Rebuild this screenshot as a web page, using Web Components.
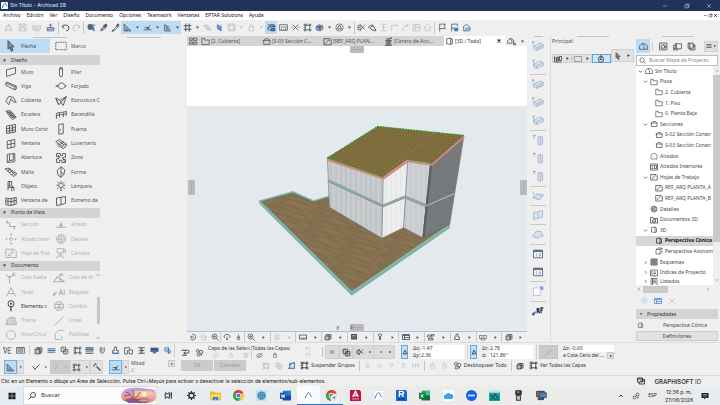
<!DOCTYPE html>
<html lang="es">
<head>
<meta charset="utf-8">
<title>Sin Título - Archicad 28</title>
<style>
  html, body { margin: 0; height: 100%; }
  body { background: #efefef; }
</style>
</head>
<body>
<archi-app></archi-app>
<script>
const RESET = `
  *, *::before, *::after { box-sizing: border-box; }
  button, input { font: inherit; color: inherit; margin: 0; padding: 0; border: 0; background: none; border-radius: 0; min-width: 0; outline: 0; }
  button { display: inline-flex; align-items: center; justify-content: center; white-space: nowrap; flex: none; }
  a { color: inherit; text-decoration: none; }
`;

/* Glyphs on a 16 x 16 grid, stroked with the current colour. */
const GLYPHS = {
  caret: '<path class="f" d="M3 5h10l-5 7z"/>',
  play: '<path class="f" d="M5 3l7 5-7 5z"/>',
  chevdown: '<path d="M3 5.500l5 5 5-5" stroke-width="2.400"/>',
  chevup: '<path d="M3 10.500l5-5 5 5" stroke-width="2.400"/>',
  chevright: '<path d="M6 3l5 5-5 5" stroke-width="2"/>',
  chevleft: '<path d="M10 3L5 8l5 5" stroke-width="2.400"/>',
  neu: '<path d="M1 12h14M4 12V6h8v6M8 6V2M5.500 4.500L8 2l2.500 2.500M2 14h3M11 14h3"/>',
  save: '<path d="M2 2h12v12H2zM5 2v4h6V2M4 14V9h8v5"/>',
  print: '<path d="M1 5h14v6H1zM4 11v3h8v-3M4 8h8"/>',
  share: '<path d="M2 8h12v6H2zM8 9V2M5 4.500L8 2l3 2.500" /><path d="M2 11h12" stroke="#3a78c8" stroke-width="2"/>',
  undo: '<path d="M5 3L2 7l4 2.500M2 7c4-5 12-4 12 2 0 3-2 5-5 5" stroke-width="1.700"/>',
  redo: '<path d="M11 3l3 4-4 2.500M14 7C10 2 2 3 2 9c0 3 2 5 5 5" stroke-width="1.700"/>',
  find: '<circle cx="6" cy="7" r="4" fill="#3a6fb0"/><path d="M2 3h9v8H2zM12 2l2 2-2 2M9 10l5 4" /><path d="M12 8v6" stroke="#2d6fc2" stroke-width="2"/>',
  pick: '<path d="M3 14l1-4 6-6 3 3-6 6z" fill="#7da8dd"/><path class="f" d="M9 3l3-2 3 3-2 3z"/><path d="M8 4l4 4" stroke-width="2"/>',
  inject: '<path d="M2 15l4-5 6-6 2 2-6 6z" fill="#cfd8e4"/><path class="f" d="M9 4l4-3 2 2-3 4z"/><path d="M2 15l3-3" stroke-width="2"/>',
  setsq: '<path d="M2 2v12h12z" stroke-width="1.600"/><path d="M5 8v3.500h3.500zM5 14v-2M8 14v-2M11 14v-1"/>',
  guide: '<path d="M1 12h14M3 8h7M7 12l6-8" stroke-width="1.400"/><circle cx="9" cy="9" r="1.500" fill="#3a78c8"/>',
  snap: '<path d="M3 2v12M3 5h4v9M6 9h5v5M3 14h11" stroke-width="1.500"/><path d="M7 6h4" stroke="#3a78c8"/>',
  grid: '<path d="M5 1v14M11 1v14M1 5h14M1 11h14" stroke-width="1.800"/>',
  plane: '<path d="M1 4h8l6 8H7zM4 4l7 8" stroke="#a7bcd8" fill="#d5e1f0"/>',
  cutp: '<path d="M4 3l7 4v7l-7-4z" fill="#5b97e0" stroke="#3d6fb4"/><path d="M11 2v13" stroke="#8aa"/>',
  sq: '<path d="M2 2h12v12H2zM4 4h8v8H4z"/>',
  lock: '<path d="M4 7h8v7H4zM5.500 7V5c0-4 5-4 5 0v2"/>',
  susp: '<path d="M2 13V7h5V3h6M4 13h8V8M6 5L2 2M12 3v4M9 6h6" stroke-width="1.800"/><path d="M7 9h7v5H7z" fill="#3a78c8"/>',
  meas: '<path d="M1 3h14v10H1zM4 6v2M7 6v3M10 6v2M4 13v-3M8 13v-2M12 13V6" stroke-width="1.300"/>',
  cross: '<path d="M3 3l10 10M13 3L3 13M1 8h2M13 8h2" stroke-width="1.500"/>',
  group: '<path d="M4 4h8v8H4zM2 2h3v3H2zM11 2h3v3h-3zM2 11h3v3H2zM11 11h3v3h-3z" stroke-width="1.300"/><path d="M7 1v4M1 8h4" />',
  cube: '<path d="M2 6l5-3 7 2v6l-5 3-7-2zM2 6l7 2 5-3M9 8v6" fill="#9cbce8"/><circle cx="8" cy="8" r="2.500" fill="#3a78c8"/>',
  tri: '<circle cx="8" cy="8" r="6.500"/><path d="M8 3.500l4 7H4z" stroke-width="1.500"/>',
  trim: '<path d="M2 3v10M2 8h4M14 3L6 12M6 5l8 6" stroke-width="1.400"/><circle cx="6" cy="4" r="1.500"/><circle cx="6" cy="12" r="1.500"/>',
  adjust: '<path d="M1 9c2-6 8-7 9-3M4 10c0-3 3-5 6-4l4 7-3 1z" stroke-width="1.700"/>',
  inter: '<path d="M3 2h10M8 2v12M3 14h10M5 8h6"/>',
  corner: '<path d="M3 14V4h10M10 2l3 2-3 2"/>',
  fillet: '<path d="M3 14c0-6 4-10 10-10M10 2l3 2-3 3"/>',
  elev: '<path d="M2 3h12v11H2zM6 3v11M6 8h8M9 3v3"/>',
  home: '<path d="M1.500 8L8 2l6.500 6H12v6H4V8z"/>',
  pent: '<path d="M2 6l4-3h4l4 3v8H2z" stroke-width="1.200"/>',
  flag: '<path d="M3 15V2h10l-2 4 2 4H3" stroke-width="1.400"/>',
  flagb: '<path d="M3 15V2h10v4M3 9h5" stroke-width="1.400"/><path d="M8 9h6v5H8z" fill="#3a78c8" stroke="#3a78c8"/>',
  homeb: '<path d="M2 7l6-5 6 5v4M3 7v7h4" stroke-width="1.400"/><path d="M7 9h7v5H7z" fill="#9fc1f2" stroke="#3a78c8"/>',
  arrow: '<path d="M4 1l8 8H8.500l2 5-2 1-2-5L4 12z" stroke-width="1.200" fill="#8a8f96"/>',
  marq: '<path d="M1 3h14v10H1z" stroke-dasharray="2 1.200"/>',
  muro: '<path d="M2 5l12-3v8L2 14z"/>',
  pilar: '<path d="M6 3v10c0 1.500 4 1.500 4 0V3M6 3c0-1.500 4-1.500 4 0s-4 1.500-4 0"/>',
  viga: '<path d="M1 4l2-1 12 5v4l-2 1L1 7zM1 4l12 5v4M13 9l2-1"/>',
  forj: '<path d="M1 8l4-1c0-4 7-4 7-1l3 2-3 2c-2 3-7 2-7-1z"/>',
  cub: '<path d="M1 8l4-6 6 1 4 7-4-1-3-4-3 8z"/>',
  estr: '<path d="M1 4l6 3 8-5-4 12-3-4-3 3zM7 7l1 3 7-8M1 4l4 9"/>',
  esc: '<path d="M1 3l6-1 8 9-5 3zM3 5l6-1M5 7l6-1M6 9l6-1M8 11l6-1M3 3l8 9M5 3l8 9"/>',
  bar: '<path d="M1 7c4-4 8-1 14-4M1 10c4-4 8-1 14-4M2 7v6M6 5v6M11 5v6M15 3v6"/>',
  cort: '<path d="M2 4l12-2v10L2 14zM6 3.500v10M10 3v10M2 7.500l12-1.500M2 11l12-2"/>',
  puerta: '<path d="M5 2l6-1v13l-6 1zM7 8v2"/>',
  vent: '<path d="M3 4l10-2v10L3 14zM8 3v10M3 9l10-2"/>',
  luc: '<path d="M1 5l5-3 9 6-5 3zM4 7v3l7 4 4-3V8M5 4l7 5M6 9l6-4"/>',
  abert: '<path d="M3 3l10-1v11L3 14zM6 3v8h5V2M6 11l-3 3"/>',
  zona: '<path d="M2 2h5v3h3V2h4v5h-3v3h3v4H9v-3H6v3H2V9h3V6H2z"/><path d="M4 4l3 4M10 8l3 5"/>',
  malla: '<path d="M0 4c4-2 6-1 8 1s4 3 8 5l-4 4C9 12 6 10 5 8S2 5 0 4zM4 3c3 3 5 5 10 9M3 7l4-3M6 9l4-3M9 12l4-4"/>',
  forma: '<path d="M8 1l5 4-1 6-4 4-4-3-1-6zM8 1v14M8 8l4 3"/>',
  silla: '<path d="M4 2h5v6H4zM4 8v6M4 10h8v4M9 8l3 2M9 10v5M6 2v6"/>',
  lamp: '<circle cx="8" cy="7" r="3"/><path d="M6.500 12h3M7 14h2M8 1v2M2 7h2M12 7h2M3.500 2.500L5 4M12.500 2.500L11 4M3 12l2-2M13 12l-2-2"/>',
  vesq: '<path d="M1 4l7 1 7-2v9l-7 2-7-1zM8 5v9M4 4v9M12 4v9M1 8l7 1 7-2"/>',
  extr: '<path d="M2 4l6-1v10l-6 1zM8 3l6-1v9l-6 2"/>',
  secc: '<path d="M1 5h5v5h8M12 10v4M3 5V2" stroke-width="1.400"/><path class="f" d="M1 5l3-3v3zM15 10l-3 3v-3z"/>',
  alz: '<path d="M1 11h14" stroke-width="1.400"/><path class="f" d="M5 10l3-6 3 6z"/>',
  alzi: '<circle cx="8" cy="8" r="2"/><path class="f" d="M8 0l2 3H6zM8 16l2-3H6zM0 8l3-2v4zM16 8l-3-2v4z"/>',
  det: '<circle cx="8" cy="8" r="6"/><path d="M8 2v12M2 8h12M5 3v10M8 5h5M8 11h5"/>',
  hoja: '<path d="M1 3h11l3 3v8H1zM4 11l5-5 2 2-4 4zM9 6l1-3"/>',
  cam: '<path d="M3 2h8v6H3zM11 4l3-1v4l-3-1M7 8v3M7 9l-5 6M7 9l5 6M4 12h6"/>',
  crad: '<path d="M1 3l5 5M6 8l5-5M6 8v7M3 6h5M10 5l4-4M11 1v4h3" stroke-width="1.400"/>',
  cang: '<path d="M1 13h14L6 6zM8 8c2 1 2 3 2 5M9 3h2v2H9zM13 2v3" stroke-width="1.400"/>',
  texto: '<path d="M2 14L8 2l6 12M4 10h8" stroke-width="1.300"/>',
  etiq: '<path d="M0 12l5-4M8 12l2.500-7L13 12M9 10h3M15 5v7" stroke-width="1.400"/><path class="f" d="M0 13l1-4 3 3z"/>',
  elem: '<circle cx="8" cy="5" r="4"/><path d="M8 9v6" stroke-width="1.600"/><circle cx="8" cy="5" r="1.300" class="f"/>',
  cambio: '<circle cx="8" cy="8" r="6"/><path d="M2 6h12M2 10h12M5 3l6 10M11 3l-5 10"/>',
  trama: '<path d="M1 13l2-7 5-3 6 1-2 3 3 2v4z" fill="currentColor" fill-opacity=".5"/>',
  linea: '<path d="M2 14L14 2"/>',
  circ: '<circle cx="8" cy="8" r="6"/>',
  poli: '<path d="M3 14V6l4-4h7M3 14h7c3 0 3-4 0-5"/>',
  tile4: '<path d="M1 2h5v4H1zM8 2h6v4H8zM1 9h5v4H1zM8 9h6v4H8z" stroke-width="1.400"/>',
  folder: '<path d="M1.500 2.500h5v3h8v8h-13z" stroke-width="1.300"/>',
  sect: '<path d="M3 6l3-3h5l3 3M1 6h14M3 6v7h11V6" stroke-width="1.400"/>',
  sheet: '<path d="M1.500 3h11l2 2v9h-13zM4 12l6-7 2 2" stroke-width="1.500"/>',
  tower: '<path d="M4 15V6M8 15V5M12 15V6M2 6h12M4 3h8M2 15h12M6 3v12M10 3v12" stroke-width="1.300"/>',
  box3: '<path d="M3 3l7-1v11l-7-1zM10 2l3 2v8l-3 1" stroke-width="1.300"/>',
  boxa: '<path d="M2 5h8v9H2zM2 5l4-3h8v8l-4 4M10 5l4-3" stroke-width="1.300"/>',
  x: '<path d="M4 4l8 8M12 4l-8 8" stroke-width="3"/>',
  pub: '<path d="M1 11V7l4-4 4 4v4zM5 3l4 0 3 4v4M11 11h4v3h-3z" stroke-width="1.400"/>',
  houses: '<path d="M1 13V7l4-4 4 4v6zM5 3h5l5 4v6H9" stroke-width="1.300"/>',
  vmap: '<path d="M1 2h13v12H1zM4 11V7l3-2 3 2v4zM8 5l4 2v4" stroke-width="1.400"/>',
  layout: '<path d="M4 3h11v9H4zM1 6v8h9M1 6h3M6 3v9M1 14l3-4" stroke-width="1.300"/>',
  stack: '<path d="M2 2h9v9H2zM5 11v3h9V5h-3M5 2v9M11 8h3" stroke-width="1.500"/>',
  menu: '<path d="M1 4h14M1 8h14M1 12h14" stroke-width="1.800"/>',
  mag: '<circle cx="7" cy="7" r="5" stroke-width="1.500"/><path d="M11 11l4 4" stroke-width="1.700"/>',
  magl: '<circle cx="10" cy="6" r="5" stroke-width="1.500"/><path d="M6 10l-5 5" stroke-width="1.700"/>',
  inte: '<path d="M1 2h14v12H1zM3 5h4M3 8h3M3 11h4M9 5h4v6H9z" stroke-width="1.500"/>',
  doc3: '<path d="M1 3h5l1 2h8v9H1zM5 12V8l3-1 3 2v3zM9 7l3 1" stroke-width="1.600"/>',
  table: '<path d="M2 2h12v12H2zM2 6h12M2 10h12M6 2v12M10 2v12" stroke-width="1.700"/>',
  index: '<path d="M1 2h14v12H1zM4 5v7M7 6h5M7 9h5M3 5h2M7 12h3" stroke-width="1.400"/>',
  list: '<path d="M2 1h12v14H2zM4 4h8M4 7h8M4 10h8M5 1v14" stroke-width="1.400"/>',
  info: '<circle cx="8" cy="8" r="6.500"/><path d="M8 4v8M4 8h8"/>',
  hand: '<circle cx="8" cy="9" r="5.500" stroke-width="1.500"/><path d="M8 1v9M5 4l3-3 3 3M5 9h6" stroke-width="1.500"/>',
  meth: '<path d="M1 6h4v8H1zM6 4h3v7H6zM11 3h4v8h-4zM1 3v3M6 14h9" stroke-width="1.500"/>',
  win: '<path d="M1 3h14v10H1zM1 5h14M5 5v8M5 9h10" stroke-width="1.700"/>',
  winy: '<path d="M2 3h12v10H2z" stroke="#666e78" fill="#fff" stroke-width="1.300"/><path d="M2 4h12" stroke="#666e78" stroke-width="3"/><path d="M5 8h2M9 8h3M5 10.500h2M9 10.500h3" stroke="#4a83cf"/>',
  beam: '<path d="M2 8l9-4 4 2v4l-9 4-4-2zM2 8l4 2 9-4M6 10v4M9 9v4M12 7v4" stroke="#a9b7c8" fill="#d3e1f3"/><path d="M1 1v5M0 3h4" stroke="#a4acb5"/>',
  beamg: '<path d="M2 8l9-4 4 2v4l-9 4-4-2zM2 8l4 2 9-4M6 10v4" stroke="#a9b7c8" fill="#cfe0f6"/><path d="M1 3h3M2 2v4" stroke="#8fbf95" stroke-width="1.500"/>',
  col: '<path d="M8 4l3-1 3 1v10l-3 1-3-1zM11 4v10" stroke="#a9b7c8" fill="#d3e1f3"/><path d="M1 2h4M3 1v5" stroke="#a4acb5"/>',
  slab: '<path d="M1 10l6-5 8 2-5 6z" stroke="#93a9c4" fill="#cfe0fb"/><path d="M2 3v3" stroke="#9aa3ad"/>',
  wallp: '<path d="M2 5l12-3v9L2 14zM8 4v8" stroke="#a9b9cb" fill="#d7e4f6"/>',
  roofp: '<path d="M1 11l5-7 6 1 3 6-4-1-3 4z" stroke="#a4b2c2" fill="#d7e4f6"/>',
  box2: '<path d="M2 4h9v10H2z" stroke="#b9c3cf" fill="#fff"/><path d="M10 2h5v5h-2z" fill="#6fa0e4" stroke="none"/>',
  rf: '<path d="M0 13l5-4" stroke="#2e6fd0" stroke-width="2"/><circle cx="2" cy="12" r="2" fill="#2e6fd0" stroke="none"/><path d="M7 11V5h2v3H7M9 8l1 3M12 11V4h3M12 7h2" stroke-width="1.700"/>',
  orb: '<path d="M7 2a6 6 0 1 1-4 10M3 8h7M6 5L3 8l3 3" stroke-width="1.600"/>',
  orbr: '<path d="M9 2a6 6 0 1 0 4 10M13 8H6M10 5l3 3-3 3" stroke-width="1.600"/>',
  zoomp: '<circle cx="7" cy="7" r="5" stroke-width="1.600"/><path d="M7 4.500v5M4.500 7h5M11 11l4 4" stroke-width="1.700"/>',
  orbit: '<path d="M4 10C0 8 2 3 8 3s8 5 4 7M8 7v7M6 12l2 2 2-2" stroke-width="1.600"/>',
  walk: '<path d="M8 1v7M5 8h6l-1 5H6zM5 6l3 2 3-2" stroke-width="1.500"/>',
  scale: '<path d="M1 4h14v8H1zM5 9v3M9 9v3M12 9v3" stroke-width="1.600"/>',
  solid: '<path d="M2 6h8v8H2zM5 3h9v8l-3 3V6zM2 6l3-3" fill="#b9bdc2" stroke-width="1.500"/>',
  dark: '<path class="f" d="M2 2h12v11H2z"/><path d="M4 5h8M4 8h8" stroke="#ddd" stroke-width="1"/>',
  pen: '<path d="M4 2l3 6v6M12 2L9 8v6M7 8h2M6 2h4" stroke-width="1.600"/>',
  people: '<circle cx="5" cy="5" r="2.500"/><circle cx="11" cy="7" r="3"/><circle cx="6" cy="12" r="2.500"/><path d="M11 10v4" stroke-width="1.500"/>',
  rotate: '<path d="M1 4h10c5 0 5 5 0 5H5M8 6L5 9l3 3M2 13h8" stroke-width="1.600"/>',
  layers: '<path d="M1 4h6v4H1zM9 3h5v3H9zM3 11h9v3H3zM7 6l4 5" stroke-width="1.500"/>',
  eye: '<path d="M1 8c3-5 11-5 14 0-3 5-11 5-14 0zM3 14L13 2"/>',
  hatch: '<path d="M2 2h8v8H2zM6 6h8v8H6zM2 6l4-4M6 10l4-4M8 14l6-6" stroke-width="1.300"/>',
  edge: '<path d="M2 13h12M5 13V5l8-2v10" stroke="#2f66b8" stroke-width="1.800"/><path d="M5 5l3 3" />',
  updn: '<path d="M3 3h10M8 6l-4 6h8z"/>',
  up: '<path d="M8 4l-4 7h8z"/>',
  dn: '<path d="M8 12L4 5h8z"/>',
  dnl: '<path d="M3 13h10M8 10L4 4h8z"/>',
  mirror: '<path d="M8 2v12M6 8L1 4v8zM10 8l5-4v8z"/>',
  ve: '<path d="M1 3l3 10 3-10M9 3h6M9 8h5M9 13h6M9 3v10M0 3h5" stroke-width="1.300"/>',
  cols: '<path d="M1 3h6v10H1zM9 3h6v10H9zM4 5v6M12 5v6M1 3h14" stroke-width="1.300"/>',
  lines3: '<path d="M1 3h14M1 6h14M1 9h14M1 13h14" stroke-width="1.800"/><path d="M1 6h14" stroke="#3a78c8" stroke-width="2"/>',
  wave: '<path d="M1 5h14M1 11h14" stroke-width="1.500"/><path d="M1 8h14" stroke="#3a78c8" stroke-width="2"/>',
  utool: '<path d="M4 2v7c0 5 7 5 7 0V2M7 2v8" stroke-width="1.500"/>',
  brush: '<path d="M6 2h4v6h3v5H3V8h3z" stroke-width="1.500"/><path d="M3 13h10" stroke="#3a78c8" stroke-width="2"/>',
  prof: '<path d="M1 3h9v4h5v7H9V8H6v6H1z" stroke-width="1.400"/>',
  ibeam: '<path d="M2 3h12M2 13h12M7 3v10M9 3v10M3 8h10" stroke-width="1.500"/>',
  surf: '<path class="f" d="M1 3h14v7H1z"/><path d="M1 9h14" stroke="#3a78c8" stroke-width="3"/><path d="M5 12h6" stroke-width="2"/>',
  perf: '<circle cx="6" cy="6" r="4" fill="#9fc1f2" stroke="#5a8fd8"/><circle cx="11" cy="10" r="3" fill="#9fc1f2" stroke="#5a8fd8"/><path d="M10 2v12"/>',
  check: '<path d="M1 7l5 5 9-9" stroke-width="2"/><circle cx="6" cy="12" r="1.500" class="f"/>',
  curve: '<path d="M6 2c6 4 0 6 2 12" stroke-width="1.800"/>',
  wand: '<path d="M7 7l8 8" stroke-width="3"/><path d="M5 0v4M0 5h4M1.500 1.500l2 2M8.500 1.500l-2 2M1.500 8.500l2-2" stroke-width="1.500"/>',
  dot: '<circle cx="8" cy="8" r="2" class="f"/>',
  delta: '<path d="M8 3l5 10H3z" stroke-width="2.200"/>',
  windows: '<path d="M1 2h10v8H1zM4 10v4h11V5h-4M1 4h10M6 8h9" stroke-width="1.500"/>',
  sound: '<circle cx="5" cy="11" r="3"/><circle cx="11" cy="5" r="3"/><path d="M7 9l2-2M12 9v4" stroke-width="1.700"/>',
  notif: '<path class="f" d="M1 2h14v10H9l-3 3v-3H1z"/><path d="M4 5h8M4 8h8" stroke="#ccc"/>',
  gear: '<circle cx="8" cy="8" r="4.500" stroke-width="2.400"/><path d="M8 0v3M8 13v3M0 8h3M13 8h3M2.500 2.500l2 2M11.500 11.500l2 2M13.500 2.500l-2 2M4.500 11.500l-2 2" stroke-width="2.200"/>',
  task: '<path d="M3 2v2M3 12v2M9 2v2M9 12v2M2 5h8v6H2zM13 2v12" stroke-width="1.600"/><path d="M12 6h2" stroke-width="3"/>',
  min: '<path d="M3 8h10" stroke-width="1.300"/>',
  rest: '<path d="M3 5h8v8H3zM6 5V3h7v8h-2" stroke-width="1.300"/>',
  close: '<path d="M3 3l10 10M13 3L3 13" stroke-width="1.300"/>',
  logo: '<path d="M2 0h12q2 0 2 2v12q0 2-2 2H2q-2 0-2-2V2q0-2 2-2z" fill="#f7fafe" stroke="none"/><path d="M3 14C5 6 8 2 10 3s1 5 4 7" stroke="#2b62b8" stroke-width="2"/>',
  winlogo: '<path d="M1 1.500h6.500V7.500H1zM8.500 1.500H15V7.500H8.500zM1 8.500h6.500v6H1zM8.500 8.500H15v6H8.500z" fill="#1b1b1b" stroke="none"/>',
  files: '<path d="M0 2h6l2 2h8v11H0z" fill="#f3b52e" stroke="none"/><path d="M1 6h14v8H1z" fill="#fcd667" stroke="none"/><path d="M4 10h8v5h-3v-2H7v2H4z" fill="#2f83d6" stroke="none"/>',
  chrome: '<circle cx="8" cy="8" r="8" fill="#fbc22d" stroke="none"/><path d="M8 8L1.100 4A8 8 0 0 1 14.900 4z" fill="#e33b2e" stroke="none"/><path d="M8 8L1.100 4A8 8 0 0 0 8 16l3.500-6z" fill="#2ba24c" stroke="none"/><circle cx="8" cy="8" r="4" fill="#fff" stroke="none"/><circle cx="8" cy="8" r="3" fill="#3f7fe8" stroke="none"/>',
  chromeu: '<circle cx="8" cy="8" r="8" fill="#fbc22d" stroke="none"/><path d="M8 8L1.100 4A8 8 0 0 1 14.900 4z" fill="#e33b2e" stroke="none"/><path d="M8 8L1.100 4A8 8 0 0 0 8 16l3.500-6z" fill="#2ba24c" stroke="none"/><circle cx="8" cy="8" r="4" fill="#fff" stroke="none"/><circle cx="8" cy="8" r="3" fill="#3f7fe8" stroke="none"/><circle cx="12" cy="12" r="5" fill="#dfe3e6" stroke="#fff"/><circle cx="12" cy="11" r="1.800" fill="#8a8f94" stroke="none"/>',
  sphere: '<path d="M0 0h16v16H0z" fill="#c9dfec" stroke="none"/><circle cx="8" cy="8" r="6" fill="#2e7fae" stroke="none"/><path d="M3 6h10M3 10h10M8 2v12M5 3v10M11 3v10" stroke="#7db8d6" stroke-width=".8"/>',
  word: '<path d="M4 1h12v14H4z" fill="#2b7cd3" stroke="none"/><path d="M4 8h12v7H4z" fill="#1a4a9c" stroke="none"/><path d="M0 4h9v9H0z" fill="#174ea6" stroke="none"/><path d="M2 6l1.200 5L4.500 7l1.300 4L7 6" stroke="#fff"/>',
  excel: '<path d="M4 1h12v14H4z" fill="#2ca566" stroke="none"/><path d="M10 1h6v7h-6z" fill="#45c487" stroke="none"/><path d="M4 8h12v7H4z" fill="#146c3e" stroke="none"/><path d="M0 4h9v9H0z" fill="#107c41" stroke="none"/><path d="M2.500 6l4 5M6.500 6l-4 5" stroke="#fff" stroke-width="1.300"/>',
  archi: '<path d="M1 0h14v16H1z" fill="#fff" stroke="none"/><path d="M2 13C4 6 7 2 9 3s1 5 5 8" stroke="#3568b8" stroke-width="1.700"/>',
  acad: '<path d="M0 0h14l2 2v14H0z" fill="#c2123f" stroke="none"/><path d="M4 10l4-8 4 8M5.500 8h5" stroke="#fff" stroke-width="2"/><path d="M3 13h10" stroke="#f3c9d3"/>',
  revit: '<path d="M0 0h14l2 2v14H0z" fill="#1765d8" stroke="none"/><path d="M5 10V2h3c4 0 4 4 0 4H5M8 6l3 4" stroke="#fff" stroke-width="2"/><path d="M3 13h10" stroke="#0b2e6b" stroke-width="1.500"/>',
  cloud: '<path d="M0 0h16v16H0z" fill="#fff" stroke="none"/><path d="M4 13a3 3 0 0 1 0-6 4 4 0 0 1 7-1 3.500 3.500 0 0 1 1 7z" fill="#3aa2f5" stroke="none"/>',
  zoomapp: '<circle cx="8" cy="8" r="8" fill="#1462e8" stroke="none"/><path d="M3 8h10" stroke="#dfe9ff" stroke-width="2.400"/>',
  teal: '<path d="M0 0h16v16H0z" fill="#1c9ea0" stroke="none"/><path d="M0 0h16v4H0z" fill="#bfe4e4" stroke="none"/><path d="M2 7l4 4 3-5 5 6M2 13h12" stroke="#0c4f54" stroke-width="1.500"/>',
  device: '<path d="M4 1h8v6H4z" fill="#3c3c40"/><path d="M5 8h6v7H5z" fill="#bbb"/><path d="M6 3h3" stroke="#eee"/>',
  monitor: '<path d="M1 2h11v8H1z" fill="#777" /><path d="M5 4h10v7H5z" fill="#3c8ad8" stroke="#444"/><path d="M3 12h8v2H3z" fill="#999"/>'
};

class UiIcon extends HTMLElement {
  connectedCallback() {
    if (!this.shadowRoot) this.attachShadow({ mode: 'open' });
    const s = this.getAttribute('size') || 10;
    this.shadowRoot.innerHTML = `<style>
      :host { display: inline-flex; flex: none; }
      svg { display: block; width: ${s}px; height: ${s}px; overflow: visible; fill: none; stroke: currentColor; stroke-width: 1.200; }
      .f { fill: currentColor; stroke: none; }
    </style><svg viewBox="0 0 16 16" aria-hidden="true">${GLYPHS[this.getAttribute('name')] || ''}</svg>`;
  }
}
customElements.define('ui-icon', UiIcon);
const ic = (name, size = 10) => `<ui-icon name="${name}" size="${size}"></ui-icon>`;

function define(tag, css, html) {
  customElements.define(tag, class extends HTMLElement {
    connectedCallback() {
      if (!this.shadowRoot) this.attachShadow({ mode: 'open' });
      const body = typeof html === 'function' ? html(this) : html;
      this.shadowRoot.innerHTML = `<style>${RESET}${css}</style>${body}`;
    }
  });
}

/* ---------- title and menus ---------- */
define('title-bar', `
  :host { display: flex; align-items: center; height: 11px; flex: none; background: #203459; color: #e9edf4; padding-left: 1px; font-family: Inter, sans-serif; }
  span { flex: 1; padding-left: 2px; }
  button { width: 22px; height: 11px; }
`, `${ic('logo', 7)}<span>Sin Título - Archicad 28</span>
  <button aria-label="Minimizar">${ic('min', 6)}</button><button aria-label="Restaurar">${ic('rest', 6)}</button><button aria-label="Cerrar">${ic('close', 6)}</button>`);

define('menu-bar', `
  :host { display: flex; align-items: center; height: 9px; flex: none; background: #fff; color: #111; padding: 0 2px 0 3px; gap: 6px; }
  i { flex: 1; }
  div { display: flex; }
`, ['Archivo','Edición','Ver','Diseño','Documento','Opciones','Teamwork','Ventanas','EPTAR Solutions','Ayuda'].map(t => `<button>${t}</button>`).join('')
  + `<i></i><div><button aria-label="Minimizar vista">${ic('min', 5)}</button><button aria-label="Restaurar vista">${ic('rest', 5)}</button><button aria-label="Cerrar vista">${ic('x', 5)}</button></div>`);

/* ---------- main toolbar: "name" icon, "-name" dimmed, "v" caret ---------- */
const TOOLBAR = [
  ['w', '-neu -save -print share'], ['s', ''], ['n', 'undo -redo'], ['s', ''], ['', 'find pick inject'],
  ['on', 'setsq v guide v snap v'], ['', 'grid v -plane cutp -sq -v -lock -v'], ['on', 'susp'],
  ['', 'meas cross group cube v tri v'], ['s', ''], ['n', 'trim adjust -inter -corner -fillet -elev -home'], ['s', ''], ['', 'flag flagb homeb']
];
define('tool-bar', `
  :host { display: flex; align-items: center; height: 15px; flex: none; padding-left: 1px; color: #4b525a; }
  div { display: flex; align-items: center; height: 13px; }
  .s { width: 1px; height: 12px; margin: 0 1px; background: #c4c4c4; }
  .on { background: #bcdcf5; }
  button { width: 12px; height: 13px; }
  .n button { width: 11px; }
  .w button { width: 14px; }
  button.v { width: 8px; }
  .dim { color: #b4b8bc; }
`, TOOLBAR.map(([c, l]) => `<div class="${c}">` + l.split(' ').filter(Boolean).map(k => {
    const dim = k[0] === '-' ? 'dim' : '', n = k.replace('-', '');
    return n === 'v' ? `<button class="v ${dim}" aria-label="Más">${ic('caret', 5)}</button>` : `<button class="${dim}" aria-label="${n}">${ic(n, 9)}</button>`;
  }).join('') + '</div>').join(''));

/* ---------- toolbox ---------- */
define('tool-item', `
  :host { display: flex; min-width: 0; color: #50565c; }
  :host([dim]) { color: #aeb1b4; }
  :host([on]) { background: #bcdcf5; color: #3f454b; }
  :host([strong]) { color: #333; }
  button { flex: 1; justify-content: flex-start; gap: 4px; padding-left: 5px; overflow: hidden; }
  span { overflow: hidden; flex: 1; text-align: left; }
`, el => `<button>${ic(el.getAttribute('icon'), 12)}<span><slot></slot></span></button>`);

define('tool-section', `
  :host { display: flex; flex-direction: column; min-height: 0; }
  button { height: 10px; justify-content: flex-start; gap: 4px; padding-left: 2px; background: #d4d4d4; color: #333; }
  .body { flex: 1; display: flex; min-height: 0; }
  .g { flex: 1; min-width: 0; display: grid; grid-template-columns: 1fr 1fr; grid-auto-rows: 1fr; }
  .bar { width: 4px; display: flex; flex-direction: column; align-items: center; justify-content: space-between; padding: 2px 0; color: #555; }
  .bar b { width: 3px; height: 27px; background: #c6c6c6; margin-top: 8px; }
`, el => `<button>${ic('caret', 5)}<span>${el.getAttribute('label')}</span></button>
  <div class="body"><div class="g"><slot></slot></div>${el.hasAttribute('scroll') ? `<div class="bar">${ic('chevup', 4)}<b></b>${ic('chevdown', 4)}</div>` : ''}</div>`);

const items = (l, attr = '') => l.map(([i, t, a]) => `<tool-item icon="${i}" ${a ?? attr}>${t}</tool-item>`).join('');
define('tool-box', `
  :host { display: flex; flex-direction: column; min-height: 0; padding-top: 1px; }
  .grips { display: flex; padding-left: 33px; gap: 60px; height: 3px; align-items: center; }
  .grips i { width: 34px; height: 1px; background: #c4c4c4; }
  .col { width: 100px; flex: 1; display: flex; flex-direction: column; min-height: 0; white-space: nowrap; }
  .top { display: grid; grid-template-columns: 1fr 1fr; height: 14px; margin-bottom: 2px; }
`, `<div class="grips"><i></i><i></i></div><div class="col">
  <div class="top">${items([['arrow','Flecha','on'],['marq','Marco']])}</div>
  <tool-section label="Diseño" style="flex:10 1 10px">${items([['muro','Muro'],['pilar','Pilar'],['viga','Viga'],['forj','Forjado'],['cub','Cubierta'],['estr','Estructura C'],['esc','Escalera'],['bar','Barandilla'],['cort','Muro Cortir'],['puerta','Puerta'],['vent','Ventana'],['luc','Lucernario'],['abert','Abertura'],['zona','Zona'],['malla','Malla'],['forma','Forma'],['silla','Objeto'],['lamp','Lámpara'],['vesq','Ventana de'],['extr','Extremo de']])}</tool-section>
  <tool-section label="Punto de Vista" style="flex:3 1 10px">${items([['secc','Sección'],['alz','Alzado'],['alzi','Alzado Inter'],['det','Detalle'],['hoja','Hoja de Trat'],['cam','Cámara']], 'dim')}</tool-section>
  <tool-section label="Documento" scroll style="flex:5 1 10px">${items([['crad','Cota Radia'],['cang','Cota de Ár'],['texto','Texto'],['etiq','Etiqueta'],['elem','Elemento c','strong'],['cambio','Cambio'],['trama','Trama'],['linea','Línea'],['circ','Arco/Círcul'],['poli','Polilínea']], 'dim')}</tool-section>
</div>`);

/* ---------- tabs ---------- */
define('tab-bar', `
  :host { display: flex; height: 10px; flex: none; color: #4d5257; background: #d4d4d4; }
  .t { width: 61px; justify-content: flex-start; gap: 1px; padding-left: 1px; position: relative; overflow: hidden; }
  .grid { width: 13px; }
  .on { background: #fff; color: #333; }
  .on span { flex: 1; text-align: left; }
  .on ui-icon:last-child { margin-right: 3px; color: #222; }
  .dot { position: absolute; left: 7px; top: 1px; width: 2px; height: 2px; border-radius: 1px; background: #e8432f; }
  .end { flex: 1; background: #efefef; gap: 4px; }
`, `<button class="grid" aria-label="Vistas">${ic('tile4', 9)}</button>
  <button class="t">${ic('folder', 9)}<span>[2. Cubierta]</span></button>
  <button class="t">${ic('sect', 9)}<span>[S-03 Sección C...</span></button>
  <button class="t">${ic('sheet', 9)}<span>[REF_ARQ PLAN...</span></button>
  <button class="t">${ic('tower', 9)}<i class="dot"></i><span>[Centro de Acci...</span></button>
  <button class="t on">${ic('box3', 9)}<span>[3D / Todo]</span>${ic('x', 6)}</button>
  <button class="end" aria-label="Publicar">${ic('pub', 9)}${ic('caret', 5)}</button>`);

/* ---------- 3D view ---------- */
define('model-view', `
  :host { display: block; position: relative; flex: 1; min-height: 0; overflow: hidden; background: linear-gradient(#fff 21%, #e3e9ec 21%); border-bottom: 1px solid #b7b9ee; color: #333; }
  svg { display: block; width: 100%; height: 100%; }
  .h { position: absolute; background: #b9bcbe; display: flex; align-items: center; justify-content: center; border-radius: 1px; }
  .h::after { content: ""; }
  .tb { width: 14px; height: 7px; left: 48%; }
  .tb::after { width: 10px; border-top: 1px dashed #d0a070; }
  .lr { width: 7px; height: 15px; top: 47%; }
  .lr::after { height: 11px; border-left: 1px dashed #c9a284; }
  .ax { position: absolute; bottom: 0; }
`, `<svg viewBox="187 46 340 286" preserveAspectRatio="xMidYMid meet" role="img" aria-label="Modelo 3D">
  <defs>
    <pattern id="tile" width="3.200" height="2.600" patternUnits="userSpaceOnUse" patternTransform="rotate(7) skewX(-32)"><path d="M0 0h3.200v2.600H0z" fill="#567a34"/><path d="M0 .8h2.500v1.600H0z" fill="#ab5f47"/></pattern>
    <pattern id="wood" width="41" height="11" patternUnits="userSpaceOnUse" patternTransform="rotate(24)"><path d="M0 0h41v11H0z" fill="#867150"/><path d="M0 2h14M20 4h16M6 6h12M28 8h12M2 10h20" stroke="#7a6648" stroke-width="1"/><path d="M18 1h14M0 5h5M14 8h8M30 10h8" stroke="#8f7a58" stroke-width=".9"/></pattern>
    <pattern id="siding" width="5" height="10" patternUnits="userSpaceOnUse"><path d="M1 0v10" stroke="#000" stroke-opacity=".06" stroke-width="1.500"/></pattern>
    <pattern id="brick" width="6" height="5" patternUnits="userSpaceOnUse" patternTransform="skewY(-35)"><path d="M0 0h6M1 0v2.500M4 2.500V5M0 2.500h6" stroke="#85888a" stroke-width=".4" fill="none"/></pattern>
  </defs>
  <path d="M259 201.500L351.700 292.500 450 225v3.500L351.700 296.500 259 204z" fill="#8fa8a3"/>
  <path d="M259 201.500L292.700 192.300 313.300 201.300 330 196.500 420 200 450 225 351.700 292.500z" fill="url(#wood)"/>
  <path d="M330 196.500L313.300 201.300 292.700 192.300 259 201.500 351.700 292.800 450 225.500" fill="none" stroke="#6fc4b2" stroke-width="1.300"/>
  <path d="M259 204L351.700 296 450 228.500" fill="none" stroke="#79b9ad" stroke-width=".700"/>
  <path d="M327.300 158L383.300 178 382 239 329.300 207.700z" fill="#c9cccf"/>
  <path d="M327.300 158L383.300 178 382 239 329.300 207.700z" fill="url(#siding)"/>
  <path d="M383.300 178L408 160 403.700 228.300 382 239z" fill="#eceeef"/>
  <path d="M383.300 178L408 160 403.700 228.300 382 239z" fill="url(#siding)" opacity=".5"/>
  <path d="M408 160L430.300 163.500 422.700 238.300 403.700 228.300z" fill="#cdd1d4"/>
  <path d="M408 160L430.300 163.500 422.700 238.300 403.700 228.300z" fill="url(#siding)" opacity=".6"/>
  <path d="M430.300 163.500L464.300 136 450 225 422.700 238.300z" fill="#737678"/>
  <path d="M430.300 163.500L464.300 136 450 225 422.700 238.300z" fill="url(#brick)"/>
  <path d="M430.300 164L422.700 238.300 425 237 432.500 163z" fill="#5b5e60"/>
  <path d="M327.300 158L329.300 207.700 382 239 403.700 228.300 422.700 238.300 450 225 464.300 136M383.300 178L382 239M408 160L403.700 228.300" fill="none" stroke="#6a6e70" stroke-width=".600"/>
  <path d="M328 181L383 206.500 405 197.500 426 206" fill="none" stroke="#82888b" stroke-width="2.600"/>
  <path d="M328 180.500L383 206 405 197.500 426 206" fill="none" stroke="#a9aeb0" stroke-width="1.200"/>
  <path d="M328 181L366 198.500" fill="none" stroke="#79b8ac" stroke-width="1.200"/>
  <path d="M426 206.500L455 194" fill="none" stroke="#b3b7b9" stroke-width="1.200"/>
  <path d="M327.300 160L383.300 179 408 161.500 432 165 464.300 137" fill="none" stroke="#cf8a7f" stroke-width="2.200"/>
  <path d="M377.700 126.700L464.300 135.700 432.700 163.300 408 160 383.300 177.500 327.300 158.300z" fill="url(#tile)"/>
  <path d="M327.300 158.300L377.700 126.700 464.300 135.700" fill="none" stroke="#2f8f25" stroke-width="1.200" stroke-dasharray="2 .8"/>
  <path d="M327.300 158.300L383.300 177.500M408 160l24.700 3.300" fill="none" stroke="#3b8a28" stroke-width="1"/>
  <path d="M434 133L385 174" stroke="#c77a63" stroke-width=".700" stroke-dasharray="2 2"/>
</svg>
<i class="h tb" style="top:0"></i><i class="h tb" style="bottom:0"></i><i class="h lr" style="left:1px"></i><i class="h lr" style="right:0"></i>
<span class="ax" style="left:44%">y</span><span class="ax" style="left:48%">z</span>`);

/* ---------- view controls ---------- */
define('view-controls', `
  :host { display: flex; height: 10px; flex: none; color: #4b5157; padding-left: 1px; }
  div { display: flex; flex: 1; border-right: 1px solid #c9c9c9; }
  div.a { flex: none; width: 33px; } div.b { flex: none; width: 24px; }
  div:last-child { border: 0; }
  button { flex: 1; }
  .dim { color: #bbb; }
`, `<div class="a"><button aria-label="Anterior">${ic('orb', 8)}</button><button class="dim" aria-label="Siguiente">${ic('orbr', 8)}</button><button aria-label="Zoom">${ic('zoomp', 8)}</button></div>
  <div class="b"><button aria-label="Órbita">${ic('orbit', 8)}</button><button aria-label="Explorar">${ic('walk', 7)}</button></div>`
  + ['zoomp', '-people', 'scale', 'solid', 'dark', 'pen', 'win', 'layers', 'brush', 'print', 'solid'].map(n => `<div><button class="${n[0] === '-' ? 'dim' : ''}" aria-label="${n}">${ic(n.replace('-', ''), 8)}</button><button class="${n[0] === '-' ? 'dim' : ''}" aria-label="Opciones">${ic('play', 5)}</button></div>`).join(''));

/* ---------- strip of palette buttons ---------- */
const STRIP = ['beam','beamg|','beam','beam','beamg|','col','col','col|','slab|','wallp|','roofp|','winy','winy|','box2|','rf'];
define('tool-strip', `
  :host { display: flex; flex-direction: column; min-height: 0; padding: 1px 4px 22px 3px; border-right: 1px solid #dcdcdc; }
  :host::before { content: ""; width: 9px; height: 1px; background: #c4c4c4; align-self: center; }
  button { flex: 1 1 0; }
  .r { border-bottom: 1px solid #c9c9c9; }
`, STRIP.map(s => `<button class="${s.endsWith('|') ? 'r' : ''}" aria-label="Paleta">${ic(s.replace('|', ''), 12)}</button>`).join(''));

/* ---------- info box ---------- */
define('info-panel', `
  :host { display: flex; flex-direction: column; padding: 1px 1px 0; color: #333; }
  i { width: 32px; height: 1px; background: #c4c4c4; align-self: center; }
  .row { display: grid; grid-template-columns: 20fr 20fr 20fr 23fr; align-items: end; margin-top: 4px; }
  button { height: 9px; border: 1px solid #d0d0d0; background: #e2e2e2; gap: 3px; }
  .on { background: #cce6fa; border-color: #58a6dd; }
  .big { height: 13px; margin-bottom: 1px; gap: 4px; }
  label { margin-top: 1px; color: #5e3f54; }
`, `<i></i><label>Principal:</label><div class="row"><button aria-label="Método">${ic('meth', 8)}${ic('play', 5)}</button><button aria-label="Marco">${ic('marq', 8)}${ic('play', 5)}</button><button class="on" aria-label="Giro">${ic('hand', 8)}</button><button class="big" aria-label="Flecha">${ic('arrow', 8)}${ic('play', 5)}</button></div>`);

/* ---------- navigator ---------- */
define('tree-row', `
  :host { display: flex; min-height: 0; min-width: 0; white-space: nowrap; overflow: hidden; color: #42474c; }
  :host([sel]) { background: #d6d6d6; color: #111; font-weight: 700; }
  button { flex: 1; justify-content: flex-start; gap: 2px; overflow: hidden; height: 100%; }
  .tw { width: 6px; display: flex; justify-content: center; flex: none; }
`, el => {
    const open = el.getAttribute('open');
    return `<button style="padding-left:${(+el.getAttribute('level')) * 5 + 1}px"><span class="tw">${open === null ? '' : ic(open === 'yes' ? 'chevdown' : 'chevright', 5)}</span>${ic(el.getAttribute('icon'), 8)}<span><slot></slot></span></button>`;
  });

const TREE = [[0,'houses','Sin Título','yes'],[1,'folder','Pisos','yes'],[2,'folder','2. Cubierta'],[2,'folder','1. Piso'],[2,'folder','0. Planta Baja'],[1,'sect','Secciones','yes'],[2,'sect','S-02 Sección Constr'],[2,'sect','S-03 Sección Constr'],[1,'pent','Alzados'],[1,'inte','Alzados Interiores'],[1,'sheet','Hojas de Trabajo','yes'],[2,'sheet','REF_ARQ PLANTA_Á'],[2,'sheet','REF_ARQ PLANTA_B'],[1,'det','Detalles'],[1,'doc3','Documentos 3D'],[1,'box3','3D','yes'],[2,'box3','Perspectiva Cónica','','sel'],[2,'boxa','Perspectiva Axonom'],[1,'table','Esquemas','no'],[1,'index','Índices de Proyecto','no'],[1,'list','Listados','no']];
define('nav-panel', `
  :host { display: flex; flex-direction: column; min-height: 0; color: #42474c; padding: 1px 0 1px 1px; }
  .grip { width: 32px; height: 1px; margin: 0 auto 2px; background: #c4c4c4; flex: none; }
  .tabs { display: flex; height: 14px; flex: none; align-items: center; padding-right: 2px; }
  .tabs button { width: 14px; height: 14px; }
  .tabs .on { background: #bcdcf5; }
  .tabs i { width: 1px; height: 9px; background: #ccc; margin: 0 3px 0 2px; }
  .tabs hr { flex: 1; border: 0; }
  .tabs .menu { background: #dedede; border: 1px solid #cfcfcf; height: 11px; gap: 1px; }
  label { display: flex; align-items: center; gap: 3px; height: 11px; flex: none; border: 1px solid #bdbdbd; background: #fff; margin: 2px 2px 0 0; padding-left: 2px; }
  input { flex: 1; width: 40px; }
  input::placeholder { color: #80858a; opacity: 1; }
  .mid { flex: 1; min-height: 0; display: flex; }
  .tree { flex: 1; min-width: 0; background: #fff; display: grid; grid-template-rows: repeat(20, minmax(0, 1fr)) 7px; }
  .vs { width: 7px; display: flex; flex-direction: column; align-items: center; padding: 3px 0; gap: 2px; flex: none; color: #666; }
  .vs b { flex: 1; width: 7px; background: #c9c9c9; margin-bottom: 34px; }
  .hs { display: flex; align-items: center; height: 8px; flex: none; padding: 0 10px 0 1px; gap: 2px; }
  .hs b { width: 25px; height: 7px; background: #c9c9c9; margin-right: auto; }
  .act { display: flex; height: 15px; flex: none; align-items: center; padding-left: 1px; }
  .act button { width: 14px; height: 14px; }
  .prop { background: #d4d4d4; height: 10px; justify-content: flex-start; gap: 4px; padding-left: 3px; margin: 1px 2px 0 0; color: #333; }
  .cur { display: flex; align-items: center; justify-content: space-between; height: 12px; flex: none; padding: 0 13px 0 1px; }
  .def { height: 10px; border: 1px solid #cacaca; background: #e1e1e1; margin-right: 2px; }
`, `<i class="grip"></i>
  <div class="tabs"><button class="on" aria-label="Mapa de Proyecto">${ic('houses', 9)}</button><i></i><button aria-label="Mapa de Vistas">${ic('vmap', 9)}</button><button aria-label="Libro de Planos">${ic('layout', 9)}</button><button aria-label="Publicador">${ic('stack', 9)}</button><hr><button class="menu" aria-label="Menú">${ic('menu', 6)}${ic('play', 4)}</button></div>
  <label>${ic('mag', 7)}<input placeholder="Buscar Mapa de Proyecto" aria-label="Buscar Mapa de Proyecto"></label>
  <div class="mid"><div class="tree">${TREE.map(([l, i, t, o, s]) => `<tree-row level="${l}" icon="${i}" ${o ? `open="${o}"` : ''} ${s || ''}>${t}</tree-row>`).join('')}</div>
  <div class="vs">${ic('chevup', 4)}<b></b>${ic('chevdown', 4)}</div></div>
  <div class="hs">${ic('chevleft', 4)}<b></b>${ic('chevright', 4)}</div>
  <div class="act"><button aria-label="Información" style="color:#a5c0e6">${ic('info', 7)}</button><button aria-label="Nueva vista" style="color:#5a90dc">${ic('win', 8)}</button><button aria-label="Borrar" style="color:#eea08c">${ic('close', 8)}</button></div>
  <button class="prop">${ic('caret', 4)}Propiedades</button>
  <div class="cur">${ic('box3', 7)}<span>Perspectiva Cónica</span></div>
  <button class="def">Definiciones</button>`);

/* ---------- lower left bars ---------- */
define('lower-left', `
  :host { display: flex; flex-direction: column; color: #4b525a; border-top: 1px solid #dcdcdc; }
  .a { display: flex; height: 14px; align-items: center; padding-left: 1px; border-right: 1px solid #ccc; }
  .a button { flex: 1; } 
  .a i { width: 1px; height: 10px; background: #ccc; margin: 0 2px; }
  .b { display: flex; height: 14px; margin-top: 3px; align-items: stretch; padding-left: 4px; }
  .b button { border: 1px solid transparent; width: 13px; }
  .b .v { width: 7px; }
  .on { background: #bcdcf5; border-color: #6fb1e2 !important; }
  .g { background: #e2e2e2; border-color: #d3d3d3 !important; }
  .off { background: #cbcbcb; color: #aaa; }
  .b .w { width: 20px; gap: 4px; }
  .m { flex: 1; padding-left: 2px; line-height: 7px; }
  .m span { color: #999; }
  .b .m + button { height: 7px; width: 7px; background: #dedede; border-color: #c8c8c8; }
  s { width: 6px; }
`, `<div class="a"><button aria-label="Vista">${ic('ve', 9)}</button><button aria-label="Columnas">${ic('cols', 9)}</button><i></i>${['solid','wave','hatch','group','lines3','utool','brush','prof','ibeam','surf','perf'].map(n => `<button aria-label="${n}">${ic(n, 9)}</button>`).join('')}</div>
  <div class="b"><button class="on" aria-label="Escuadra">${ic('setsq', 9)}</button><button class="v g" aria-label="Más">${ic('play', 4)}</button><s></s>
  <button class="w" aria-label="Punto">${ic('check', 8)}${ic('play', 4)}</button><button class="w off" aria-label="Curva">${ic('curve', 8)}${ic('play', 4)}</button><button class="w g" aria-label="Grupo">${ic('group', 9)}${ic('play', 4)}</button><button class="g" aria-label="Varita">${ic('wand', 8)}</button><s></s>
  <button class="on" aria-label="Guía">${ic('guide', 9)}</button><button class="v g" aria-label="Más">${ic('play', 4)}</button><div class="m">Mitad<br><span>2</span></div><button aria-label="Abrir">${ic('play', 4)}</button></div>`);

/* ---------- coordinate field pair ---------- */
define('coord-pair', `
  :host { display: flex; align-items: stretch; height: 14px; padding-right: 3px; border-right: 1px solid #cfcfcf; margin-right: 2px; }
  :host([last]) { border: 0; }
  .k { width: 7px; background: #c4e0f6; border: 1px solid #5fa8e0; }
  .k.off { width: 19px; background: #cbcbcb; border-color: #c3c3c3; color: #999; }
  div { display: grid; grid-template-rows: 7px 7px; padding-left: 5px; line-height: 7px; }
  label { display: grid; grid-template-columns: 8px 43px; }
  input { background: #fff; height: 7px; padding: 0; width: 43px; }
  .c { display: flex; justify-content: space-between; }
  .c button { width: 7px; border: 1px solid #c8c8c8; background: #dedede; }
`, el => {
    const a = (el.getAttribute('vals') || '').split(','), last = el.hasAttribute('last');
    const f = (l, v) => `<label><span>${l}</span><input value="${v}"></label>`;
    return `<button class="k ${last ? 'off' : ''}" aria-label="Relativo">${last ? ic('linea', 9) : ic('delta', 6)}</button><div>${f(a[0], a[1])}${last ? `<span class="c">${a[2]}<button aria-label="Abrir">${ic('play', 4)}</button></span>` : f(a[2], a[3])}</div>`;
  });

define('lower-right', `
  :host { display: flex; flex-direction: column; color: #333; padding: 2px 0 0 3px; min-width: 0; border-top: 1px solid #dcdcdc; white-space: nowrap; }
  .r { display: flex; align-items: center; height: 14px; }
  .p { width: 14px; }
  .l { width: 44px; margin-left: 2px; overflow: hidden; line-height: 7px; border-right: 1px solid #ccc; height: 14px; }
  .l div { display: flex; padding-left: 4px; gap: 9px; height: 6px; }
  .l.e { border: 0; margin-left: 0; }
  .dim { color: #bbb; }
  .u { width: 24px; display: grid; justify-items: center; }
  i { width: 1px; height: 10px; background: #c4c4c4; margin: 0 2px; flex: none; }
  .q { display: flex; margin-right: 6px; }
  .q button { height: 14px; width: 14px; background: #dcdcdc; border: 1px solid #d0d0d0; }
  .q button.w { width: 21px; gap: 4px; }
  .t { height: 13px; padding-left: 3px; }
  .big { width: 32px; height: 11px; background: #cbcbcb; color: #999; margin-right: 1px; }
  .big + .s { margin-left: 12px; }
  .t .s { width: 13px; }
  .t .n { width: 12px; }
  .t .x { gap: 2px; padding: 0 2px; }
`, `<div class="r"><button class="p" aria-label="Girar">${ic('rotate', 9)}</button><button class="p" aria-label="Equipo">${ic('people', 9)}</button>
   <div class="l">Capa de las Selecc<div class="dim">${ic('eye', 7)}${ic('lock', 6)}${ic('layers', 6)}</div></div>
   <div class="l e">Todas las Capas:<div>${ic('eye', 7)}${ic('lock', 6)}</div></div>
   <div class="u dim">${ic('undo', 6)}${ic('redo', 6)}</div><i></i>
   <div class="q"><button aria-label="Cruz">${ic('cross', 6)}</button><button aria-label="Trama">${ic('hatch', 9)}</button><button class="w" aria-label="Puntos">${ic('trim', 8)}${ic('play', 4)}</button><button class="w" aria-label="Centro">${ic('dot', 6)}${ic('play', 4)}</button></div>
   <coord-pair vals="Δx:,-1.47,Δy:,2.36"></coord-pair><coord-pair vals="Δr:,2.78,α:,121.86°"></coord-pair><coord-pair last vals="Δz:,-0.00,a Cota Cero del ..."></coord-pair></div>
  <div class="r t"><button class="big">OK</button><button class="big">Cancelar</button>
   <button class="s dim" aria-label="Agrupar">${ic('group', 8)}</button><button class="s dim" aria-label="Desagrupar">${ic('hatch', 8)}</button><button class="s" aria-label="Editar">${ic('edge', 9)}</button><button class="x">${ic('group', 9)}Suspender Grupos</button><i></i>
   ${['updn','up','dn','dnl','mirror'].map(n => `<button class="n dim" aria-label="${n}">${ic(n, 7)}</button>`).join('')}<i></i><button class="n dim" aria-label="Bloquear">${ic('lock', 7)}</button><button class="n dim" aria-label="Desbloquear">${ic('lock', 7)}</button><button class="x">${ic('people', 9)}Desbloquear Todo</button><i></i><button class="s" aria-label="Capas">${ic('solid', 8)}</button><button class="x">${ic('group', 9)}Ver Todas las Capas</button></div>`);

define('status-bar', `
  :host { display: flex; align-items: center; height: 11px; flex: none; padding: 0 19px 0 1px; border-top: 1px solid #dadada; color: #111; font-family: Inter, sans-serif; }
  span { flex: 1; }
  a { margin-left: 10px; font-size: 6px; color: #33373b; }
  a b { font-weight: 600; } 
`, `<span>Clic en un Elemento o dibuje un Área de Selección. Pulse Ctrl+Mayús para activar o desactivar la selección de elementos/sub-elementos.</span>${ic('windows', 8)}<a href="#id"><b>GRAPHISOFT</b> ID</a>`);

/* ---------- task bar ---------- */
define('task-bar', `
  :host { display: flex; height: 19px; flex: none; align-items: stretch; color: #222; background: linear-gradient(90deg, #e3edf3, #e9eced 40%, #ecebe9 70%, #e9ecef); }
  .st { width: 23px; }
  label { display: flex; align-items: center; width: 134px; background: #fcfcfc; border: 1px solid #dcdcdc; gap: 5px; padding-left: 4px; flex: none; }
  input { width: 40px; flex: 1; font-size: 6px; }
  input::placeholder { color: #333; opacity: 1; }
  .pic { width: 35px; height: 17px; display: block; flex: none; }
  nav { flex: none; display: flex; width: 396px; }
  nav button { flex: 1; border-bottom: 1px solid transparent; }
  nav .on { background: #f8fafb; }
  nav .on, nav .run { border-color: #2f6fc0; }
  .tray { flex: 1; display: flex; align-items: center; justify-content: flex-end; gap: 8px; padding-right: 11px; }
  time { text-align: center; font: 5px/8px Inter, sans-serif; }
`, `<button class="st" aria-label="Inicio">${ic('winlogo', 8)}</button>
  <label>${ic('magl', 8)}<input placeholder="Buscar" aria-label="Buscar"><svg class="pic" viewBox="0 0 35 17" aria-hidden="true">
    <path d="M2 4Q6 0 18 1T34 3L35 9Q35 15 28 16T6 15Q-1 13 0 8z" fill="#e9a7b8"/>
    <path d="M3 4Q10 0 20 1l12 2v4L2 8z" fill="#b9a0dc"/><path d="M12 4h18l4 4-22 1z" fill="#f7c69a"/>
    <circle cx="23" cy="7" r="2.500" fill="#fdf3b8"/><path d="M1 10Q12 7 20 11t15-1l-2 4-9 2H9l-8-3z" fill="#ee9a78"/>
    <path d="M3 13q8-4 14 0t14-1l-6 4H8z" fill="#8a5590"/>
    <path d="M12 13q-1-6-7-8M12 11q2-4 0-8M13 12q5-3 6-7M14 13q8-2 14-1M9 8L3 9" stroke="#7b3f5c" stroke-width=".8" fill="none"/></svg></label>
  <nav>${[['task'],['gear'],['files'],['chrome'],['sphere'],['word'],['archi','on'],['chromeu','run'],['acad'],['archi'],['revit'],['excel'],['cloud'],['zoomapp'],['teal'],['device'],['monitor']].map(([n, c]) => `<button class="${c || ''}" aria-label="${n}">${ic(n, n === 'task' || n === 'gear' || n === 'archi' ? 9 : 11)}</button>`).join('')}</nav>
  <div class="tray">${ic('chevup', 6)}${ic('sound', 8)}<span>ESP</span><time>12:36 p. m.<br>27/06/2026</time>${ic('notif', 8)}</div>`);

/* ---------- page ---------- */
define('archi-app', `
  :host { display: flex; flex-direction: column; height: 100vh; background: #efefef; font: 5px/7px "Noto Sans", "Open Sans", sans-serif; color: #333; overflow: hidden; }
  main { flex: 1; min-height: 0; display: grid; grid-template-columns: 187px minmax(0, 1fr) 24px 84px 85px; grid-template-rows: minmax(0, 1fr) 10px; }
  tool-box { grid-row: 1 / 3; } 
  .view { display: flex; flex-direction: column; min-height: 0; padding-top: 1px; }
  view-controls { grid-column: 2; grid-row: 2; }
  tool-strip { grid-column: 3; grid-row: 1 / 3; }
  info-panel { grid-column: 4; grid-row: 1 / 3; }
  nav-panel { grid-column: 5; grid-row: 1 / 3; }
  .low { display: grid; grid-template-columns: 175px minmax(0, 1fr); height: 33px; flex: none; }
`, `<title-bar></title-bar><menu-bar></menu-bar><tool-bar></tool-bar>
  <main><tool-box></tool-box><div class="view"><tab-bar></tab-bar><model-view></model-view></div><view-controls></view-controls><tool-strip></tool-strip><info-panel></info-panel><nav-panel></nav-panel></main>
  <div class="low"><lower-left></lower-left><lower-right></lower-right></div>
  <status-bar></status-bar><task-bar></task-bar>`);
</script>
</body>
</html>
